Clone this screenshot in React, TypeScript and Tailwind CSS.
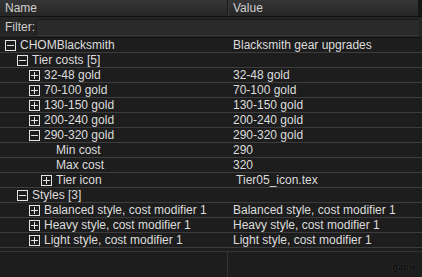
const rows: { label: string; value: string; level: number; box?: "plus" | "minus" }[] = [
  { label: "CHOMBlacksmith", value: "Blacksmith gear upgrades", level: 0, box: "minus" },
  { label: "Tier costs [5]", value: "", level: 1, box: "minus" },
  { label: "32-48 gold", value: "32-48 gold", level: 2, box: "plus" },
  { label: "70-100 gold", value: "70-100 gold", level: 2, box: "plus" },
  { label: "130-150 gold", value: "130-150 gold", level: 2, box: "plus" },
  { label: "200-240 gold", value: "200-240 gold", level: 2, box: "plus" },
  { label: "290-320 gold", value: "290-320 gold", level: 2, box: "minus" },
  { label: "Min cost", value: "290", level: 3 },
  { label: "Max cost", value: "320", level: 3 },
  { label: "Tier icon", value: " Tier05_icon.tex", level: 3, box: "plus" },
  { label: "Styles [3]", value: "", level: 1, box: "minus" },
  { label: "Balanced style, cost modifier 1", value: "Balanced style, cost modifier 1", level: 2, box: "plus" },
  { label: "Heavy style, cost modifier 1", value: "Heavy style, cost modifier 1", level: 2, box: "plus" },
  { label: "Light style, cost modifier 1", value: "Light style, cost modifier 1", level: 2, box: "plus" },
];

const indent = ["pl-[5px]", "pl-[17px]", "pl-[29px]", "pl-[41px]"];

const ToggleBox = ({ kind }: { kind: "plus" | "minus" }) => (
  <svg width="11" height="11" viewBox="0 0 11 11" className="shrink-0">
    <rect x="0.5" y="0.5" width="10" height="10" fill="none" stroke="#e4e4e4" />
    <line x1="2" y1="5.5" x2="9" y2="5.5" stroke="#e4e4e4" />
    {kind === "plus" && <line x1="5.5" y1="2" x2="5.5" y2="9" stroke="#e4e4e4" />}
  </svg>
);

export default function App() {
  return (
    <div className="w-[422px] h-[277px] bg-[#1d1d1d] text-[#dcdcdc] text-[12px] leading-none overflow-hidden flex flex-col font-['Liberation_Sans',Arial,sans-serif]">
      {/* header */}
      <div className="flex h-[17px] shrink-0 bg-gradient-to-b from-[#363636] to-[#262626] border-b border-[#111] text-[#cfcfcf]">
        <div className="w-[228px] pl-[5px] flex items-center border-r border-[#151515]">Name</div>
        <div className="flex-1 pl-[4px] flex items-center border-l border-[#3c3c3c]">Value</div>
        <div className="w-[4px] bg-[#161616]" />
      </div>

      {/* filter */}
      <div className="flex h-[21px] shrink-0 items-center bg-[#262626] border-b border-[#121212]">
        <div className="w-[36px] pl-[5px] text-[#cfcfcf]">Filter:</div>
        <div className="flex-1 h-[17px] mr-[4px] bg-[#2a2a2a] border-t border-l border-[#1a1a1a] border-b border-b-[#3a3a3a]" />
      </div>

      {/* tree */}
      <div className="flex flex-col">
        {rows.map((r) => (
          <div key={r.label} className="flex h-[15px] items-center border-b border-[#3d3d3d]">
            <div className={`w-[228px] flex items-center gap-[4px] ${indent[r.level]}`}>
              {r.box ? <ToggleBox kind={r.box} /> : <span className="w-[11px] shrink-0" />}
              <span className="whitespace-nowrap">{r.label}</span>
            </div>
            <div className="flex-1 pl-[5px] whitespace-pre">{r.value}</div>
          </div>
        ))}
      </div>

      <div className="mt-[3px] border-t border-[#333] flex-1 flex">
        <div className="w-[228px] border-r border-[#333]" />
        <div className="flex-1 flex items-end justify-end pr-[6px] pb-[5px]">
          <span className="text-[9px] text-[#050505] font-bold [text-shadow:0_0_1px_#555]">game</span>
        </div>
      </div>
    </div>
  );
}
